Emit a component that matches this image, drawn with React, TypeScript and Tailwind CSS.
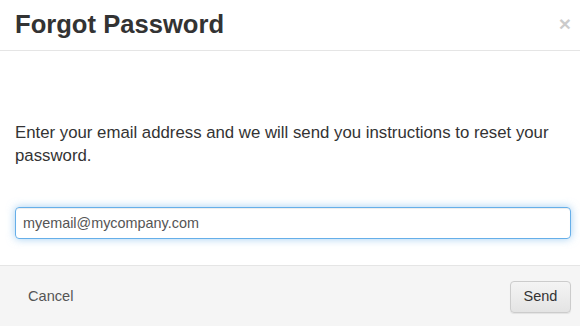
export default function App() {
  return (
    <div className="flex h-[326px] w-[580px] flex-col bg-white text-[#333] font-['Liberation_Sans',Arial,sans-serif]">
      {/* Header */}
      <div className="flex h-[51px] items-center justify-between border-b border-[#e5e5e5] pl-[15px] pr-[9px]">
        <h4 className="text-[25.6px] font-bold leading-none">Forgot Password</h4>
        <button type="button" className="-mt-[3px] text-[21px] font-bold leading-none text-black opacity-20">
          ×
        </button>
      </div>

      {/* Body */}
      <div className="flex-1 pl-[15px] pr-[9px] pt-[70px]">
        <p className="text-[16.8px] leading-[23px]">
          Enter your email address and we will send you instructions to reset your password.
        </p>
        <input
          type="email"
          defaultValue="myemail@mycompany.com"
          className="mt-[40px] h-[32px] w-full rounded-[4px] border border-[#66afe9] px-[7px] text-[14.4px] text-[#555] shadow-[inset_0_1px_1px_rgba(0,0,0,0.075),0_0_8px_rgba(102,175,233,0.6)] outline-none"
        />
      </div>

      {/* Footer */}
      <div className="flex h-[61px] items-start justify-between border-t border-[#e5e5e5] bg-[#f5f5f5] pl-[15px] pr-[9px] pt-[15px]">
        <button type="button" className="h-[32px] px-[13px] text-[14.6px] text-[#555]">
          Cancel
        </button>
        <button
          type="button"
          className="h-[32px] w-[61px] rounded-[4px] border border-[#ccc] bg-gradient-to-b from-[#f4f4f4] to-[#e4e4e4] text-[14.5px] text-[#333] shadow-[inset_0_1px_0_rgba(255,255,255,0.15),0_1px_1px_rgba(0,0,0,0.075)]"
        >
          Send
        </button>
      </div>
    </div>
  )
}
